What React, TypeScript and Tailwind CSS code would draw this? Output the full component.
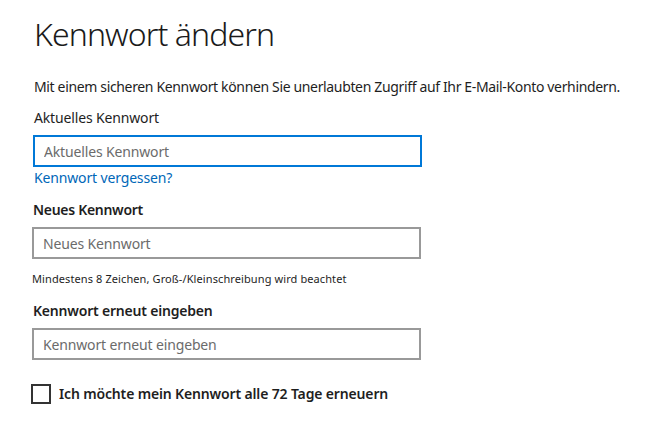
import React from "react";

const font = { fontFamily: '"Noto Sans", "Open Sans", sans-serif' };

const Field: React.FC<{ placeholder: string; active?: boolean }> = ({
  placeholder,
  active,
}) => (
  <input
    type="password"
    placeholder={placeholder}
    className={
      active
        ? "block w-[389px] h-[32px] px-[9px] border-2 border-[#0078d7] bg-white text-[14px] tracking-[-0.15px] text-[#222] placeholder:text-[#6b6b6b] outline-none"
        : "block w-[389px] h-[32px] px-[9px] border-2 border-[#999999] bg-white text-[14px] tracking-[-0.15px] text-[#222] placeholder:text-[#6b6b6b] outline-none"
    }
  />
);

export default function App() {
  return (
    <div
      className="w-[663px] h-[422px] bg-white text-[#1e1e1e] pl-[33px] pt-[14px] overflow-hidden"
      style={font}
    >
      <h1 className="text-[32px] leading-[40px] font-light tracking-[-0.9px] text-[#1a1a1a] pl-[1px]">
        Kennwort ändern
      </h1>
      <p className="mt-[23px] text-[14px] leading-[20px] tracking-[-0.35px] pl-[1px]">
        Mit einem sicheren Kennwort können Sie unerlaubten Zugriff auf Ihr
        E-Mail-Konto verhindern.
      </p>
      <label className="block mt-[11px] text-[14px] leading-[20px] tracking-[-0.15px] pl-[1px]">
        Aktuelles Kennwort
      </label>
      <div className="mt-[7px]">
        <Field placeholder="Aktuelles Kennwort" active />
      </div>
      <a
        href="#"
        className="block mt-[1px] text-[14px] leading-[20px] tracking-[-0.15px] text-[#0067b8] pl-[1px]"
      >
        Kennwort vergessen?
      </a>
      <label className="block mt-[12px] text-[14px] leading-[20px] tracking-[-0.3px] font-semibold">
        Neues Kennwort
      </label>
      <div className="mt-[7px] -ml-[1px]">
        <Field placeholder="Neues Kennwort" />
      </div>
      <p className="mt-[12px] text-[11px] leading-[16px] tracking-[0.1px] -ml-[1px]">
        Mindestens 8 Zeichen, Groß-/Kleinschreibung wird beachtet
      </p>
      <label className="block mt-[14px] text-[14px] leading-[20px] tracking-[-0.2px] font-semibold">
        Kennwort erneut eingeben
      </label>
      <div className="mt-[7px] -ml-[1px]">
        <Field placeholder="Kennwort erneut eingeben" />
      </div>
      <label className="mt-[24px] -ml-[2px] flex items-center gap-[8px]">
        <span className="block w-[20px] h-[20px] border-2 border-[#333] bg-white" />
        <span className="text-[14px] leading-[20px] tracking-[-0.15px] font-semibold">
          Ich möchte mein Kennwort alle 72 Tage erneuern
        </span>
      </label>
    </div>
  );
}
